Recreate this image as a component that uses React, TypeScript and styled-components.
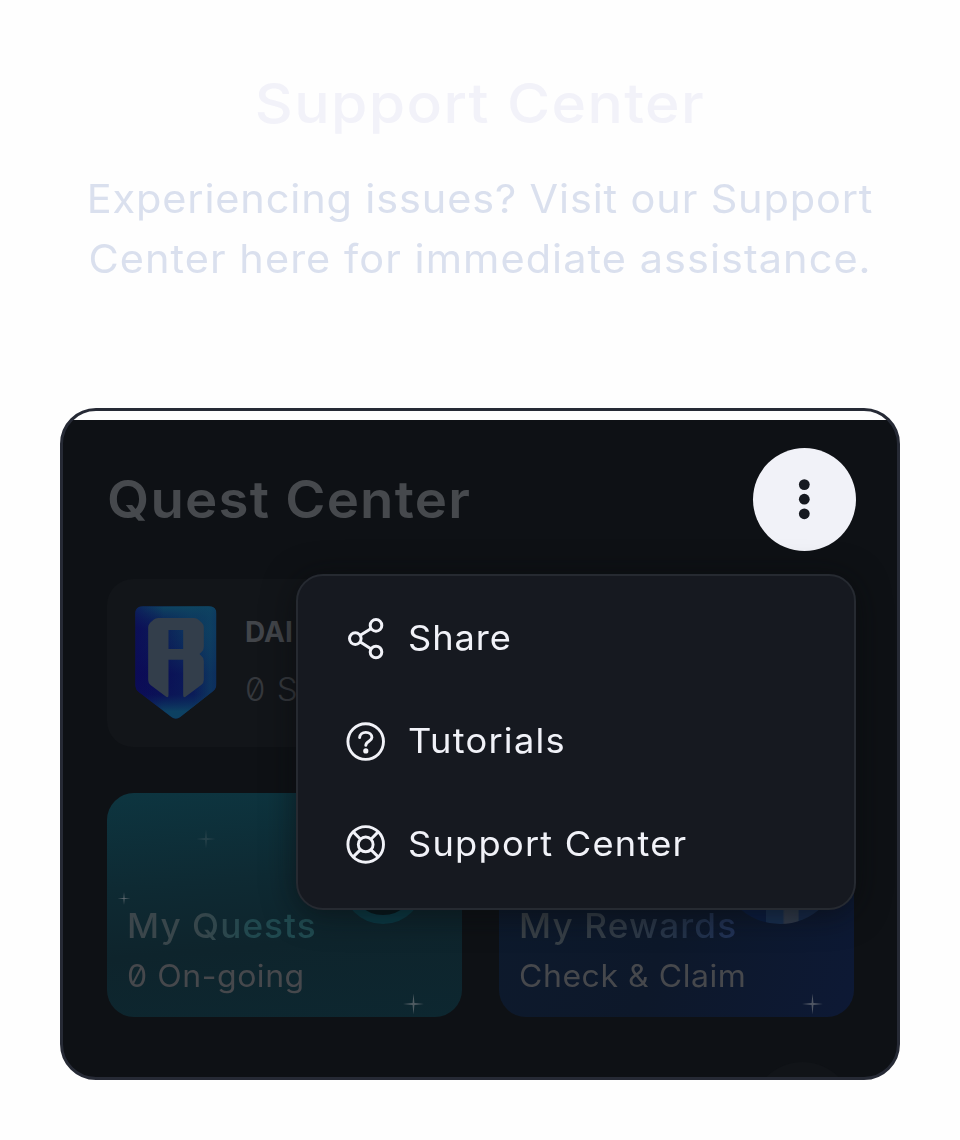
import React from "react";
import styled, { createGlobalStyle } from "styled-components";

const GlobalStyle = createGlobalStyle`
  * { box-sizing: border-box; }
  body {
    margin: 0;
    background: #fefefe;
    font-family: Inter, "Liberation Sans", sans-serif;
    font-feature-settings: "zero" 1;
  }
`;

const Page = styled.main`
  width: 960px;
  height: 1140px;
  padding: 0 60px;
  display: flex;
  flex-direction: column;
  overflow: hidden;
`;

const Intro = styled.header`
  height: 408px;
  padding-top: 73px;
  text-align: center;
  flex: none;
`;

const Title = styled.h1`
  margin: 0;
  font-size: 55.5px;
  line-height: 60px;
  font-weight: 500;
  letter-spacing: 1.3px;
  color: #f2f2f9;
  transform: scaleX(1.06);
`;

const Lead = styled.p`
  margin: 36px 0 0;
  color: #dae0ee;
`;

const LeadLine = styled.span<{ $spacing: number }>`
  display: block;
  font-size: 39.5px;
  line-height: 60px;
  white-space: nowrap;
  letter-spacing: ${(p) => p.$spacing}px;
  transform: scaleX(1.05);
`;

const Frame = styled.section`
  position: relative;
  height: 672px;
  flex: none;
  padding-top: 9px;
  border: 3px solid #262a35;
  border-radius: 36px;
  background: linear-gradient(#fefefe 9px, #0e1115 9px);
  overflow: hidden;
`;

const Screen = styled.div`
  height: 657px;
  padding: 28px 41px 0 44px;
  display: flex;
  flex-direction: column;
`;

const ScreenHeader = styled.div`
  display: flex;
  align-items: center;
  justify-content: space-between;
  height: 103px;
`;

const ScreenTitle = styled.h2`
  margin: 0;
  font-size: 52px;
  line-height: 60px;
  font-weight: 600;
  letter-spacing: 1.15px;
  color: #46494d;
  transform: scaleX(1.05);
  transform-origin: left;
`;

const MoreButton = styled.button`
  width: 103px;
  height: 103px;
  padding: 0;
  border: 0;
  border-radius: 50%;
  background: #f1f2f8;
  svg { display: block; }
`;

const Daily = styled.div`
  display: flex;
  width: 747px;
  height: 168px;
  margin-top: 28px;
  padding: 27px 28px;
  gap: 28px;
  border-radius: 26px;
  background: #121519;
`;

const DailyText = styled.div`
  display: flex;
  flex-direction: column;
  padding-top: 9px;
  white-space: nowrap;
`;

const DailyTitle = styled.div`
  font-size: 28px;
  line-height: 34px;
  font-weight: 700;
  color: #42454a;
`;

const DailyCount = styled.div`
  margin-top: 20px;
  font-size: 33px;
  line-height: 40px;
  font-weight: 300;
  letter-spacing: 1px;
  color: #35383d;
`;

const Cards = styled.div`
  display: flex;
  gap: 37px;
  margin-top: 46px;
`;

const Card = styled.div<{ $background: string }>`
  position: relative;
  display: flex;
  flex-direction: column;
  justify-content: flex-end;
  width: 355px;
  height: 224px;
  padding: 0 20px 21px;
  border-radius: 27px;
  overflow: hidden;
  background: ${(p) => p.$background};
`;

const Decoration = styled.svg`
  position: absolute;
  inset: 0;
`;

const CardTitle = styled.div<{ $ink: string; $spacing: number }>`
  position: relative;
  align-self: flex-start;
  font-size: 33.5px;
  line-height: 42px;
  font-weight: 500;
  letter-spacing: ${(p) => p.$spacing}px;
  color: transparent;
  background: ${(p) => p.$ink};
  background-clip: text;
  transform: scaleX(1.05);
  transform-origin: left;
`;

const CardNote = styled.div<{ $spacing: number }>`
  position: relative;
  margin-top: 9px;
  font-size: 30.5px;
  line-height: 40px;
  letter-spacing: ${(p) => p.$spacing}px;
  white-space: nowrap;
  color: #46484c;
  transform: scaleX(1.05);
  transform-origin: left;
`;

const Menu = styled.div`
  position: absolute;
  left: 233px;
  top: 163px;
  width: 560px;
  height: 336px;
  padding: 11px 47px;
  border: 2px solid #262a31;
  border-radius: 27px;
  background: #161920;
  box-shadow: 0 4px 32px rgba(9, 10, 12, 0.6);
`;

const MenuItem = styled.div`
  display: flex;
  align-items: center;
  gap: 21px;
  height: 102.8px;
  color: #f1f2f8;
  svg { flex: none; }
`;

const MenuLabel = styled.span<{ $spacing: number }>`
  font-size: 34.5px;
  line-height: 42px;
  letter-spacing: ${(p) => p.$spacing}px;
  white-space: nowrap;
  transform: scaleX(1.05);
  transform-origin: left;
`;

const NextBubble = styled.div`
  position: absolute;
  left: 688px;
  bottom: -88px;
  width: 103px;
  height: 103px;
  border-radius: 50%;
  background: #111418;
`;

const Shield = () => (
  <svg width="82" height="113" viewBox="105 108 245 339">
    <defs>
      <linearGradient id="shield" x1="0" y1="0.35" x2="1" y2="0.25">
        <stop offset="0" stopColor="#0c0b55" />
        <stop offset="0.3" stopColor="#0c1556" />
        <stop offset="0.7" stopColor="#0d3e61" />
        <stop offset="1" stopColor="#0e405f" />
      </linearGradient>
      <linearGradient id="tip" x1="0" y1="0" x2="0" y2="1">
        <stop offset="0" stopColor="#0e4661" />
        <stop offset="0.2" stopColor="#0c2c5b" stopOpacity="0.3" />
        <stop offset="0.6" stopColor="#0a0b55" stopOpacity="0.65" />
        <stop offset="0.78" stopColor="#0a1256" stopOpacity="0.75" />
        <stop offset="0.93" stopColor="#0d4162" />
      </linearGradient>
      <linearGradient id="edge" x1="0" y1="0" x2="1" y2="0">
        <stop offset="0" stopColor="#0c0b58" />
        <stop offset="0.35" stopColor="#0c0b58" stopOpacity="0" />
        <stop offset="0.72" stopColor="#0e3e60" stopOpacity="0" />
        <stop offset="0.92" stopColor="#0e4262" />
        <stop offset="1" stopColor="#0d3860" />
      </linearGradient>
      <clipPath id="body">
        <path d="M129 109H325Q349 109 349 133V340Q349 355 338 364L240 441Q227 451 214 441L116 366Q105 357 105 342V133Q105 109 129 109Z" />
      </clipPath>
    </defs>
    <g clipPath="url(#body)">
      <path d="M105 108H349V448H105Z" fill="url(#shield)" />
      <path d="M105 108H349V448H105Z" fill="url(#tip)" />
      <path d="M105 108H349V448H105Z" fill="url(#edge)" opacity="0.6" />
    </g>
    <path
      fillRule="evenodd"
      fill="#333e4b"
      d="M174 144H282Q290 144 295 149L305 158Q311 164 311 172V230Q311 241 304 246L298 252L304 258Q311 263 311 273V329Q311 338 304 344L258 379Q249 386 249 375V269H205V375Q205 386 196 379L151 345Q144 339 144 330V172Q144 164 150 158L160 149Q166 144 174 144ZM205 180V237H249V180Z"
    />
  </svg>
);

const ShareIcon = () => (
  <svg width="42" height="44" viewBox="0 0 42 44" fill="none" stroke="currentColor" strokeWidth="3">
    <circle cx="10.3" cy="22.6" r="5.8" />
    <circle cx="31" cy="9.4" r="5.8" />
    <circle cx="31" cy="36" r="5.8" />
    <path d="M15.3 19.3L25.8 12.7M15.3 25.9L25.8 32.7" />
  </svg>
);

const HelpIcon = () => (
  <svg width="42" height="44" viewBox="0 0 42 44" fill="none" stroke="currentColor" strokeWidth="2.9">
    <circle cx="20.7" cy="22.6" r="17.8" />
    <path d="M14.6 18.6C14.8 15.4 17.3 13.4 20.8 13.4C24.4 13.4 26.9 15.5 26.9 18.6C26.9 22.3 20.8 22.3 20.8 26.4" strokeLinecap="round" />
    <circle cx="20.8" cy="31.9" r="2.6" fill="currentColor" stroke="none" />
  </svg>
);

const BuoyIcon = () => (
  <svg width="42" height="44" viewBox="0 0 42 44" fill="none" stroke="currentColor" strokeWidth="2.9">
    <circle cx="20.7" cy="22.4" r="17.8" />
    <circle cx="20.7" cy="22.4" r="7.4" />
    <path d="M8.2 9.9L15.5 17.2M33.2 9.9L25.9 17.2M8.2 34.9L15.5 27.6M33.2 34.9L25.9 27.6" />
  </svg>
);

const Sparkle = ({ x, y, r, opacity }: { x: number; y: number; r: number; opacity: number }) => (
  <path
    transform={`translate(${x} ${y}) scale(${r})`}
    opacity={opacity}
    fill="#7b7f84"
    d="M0-1L.09-.09L1 0L.09.09L0 1L-.09.09L-1 0L-.09-.09Z"
  />
);

export default function App() {
  return (
    <>
      <GlobalStyle />
      <Page>
        <Intro>
          <Title>Support Center</Title>
          <Lead>
            <LeadLine $spacing={0.82}>Experiencing issues? Visit our Support</LeadLine>
            <LeadLine $spacing={1}>Center here for immediate assistance.</LeadLine>
          </Lead>
        </Intro>
        <Frame>
          <Screen>
            <ScreenHeader>
              <ScreenTitle>Quest Center</ScreenTitle>
              <MoreButton aria-label="More">
                <svg width="103" height="103" viewBox="0 0 103 103" fill="#161920">
                  <circle cx="51.3" cy="36.6" r="5.4" />
                  <circle cx="51.3" cy="51.2" r="5.4" />
                  <circle cx="51.3" cy="65.8" r="5.4" />
                </svg>
              </MoreButton>
            </ScreenHeader>
            <Daily>
              <Shield />
              <DailyText>
                <DailyTitle>DAI</DailyTitle>
                <DailyCount>0 S</DailyCount>
              </DailyText>
            </Daily>
            <Cards>
              <Card $background="linear-gradient(175deg, #0d3540 0%, #0e2a33 38%, #0e242c 65%, #0d2730 100%)">
                <Decoration width="355" height="224">
                  <circle cx="276" cy="90" r="36.5" fill="#08171c" stroke="#0b3a45" strokeWidth="9" />
                  <Sparkle x={99} y={46} r={10} opacity={0.22} />
                  <Sparkle x={17} y={105.5} r={6.5} opacity={0.7} />
                  <Sparkle x={306.5} y={211} r={10.5} opacity={0.6} />
                </Decoration>
                <CardTitle $spacing={1} $ink="linear-gradient(90deg, #3c464b 0%, #36464b 40%, #20484e 65%, #204a50 100%)">
                  My Quests
                </CardTitle>
                <CardNote $spacing={0.5}>0 On-going</CardNote>
              </Card>
              <Card $background="linear-gradient(110deg, #0d1a2d 0%, #0d182a 50%, #0d1935 100%)">
                <Decoration width="355" height="224">
                  <defs>
                    <linearGradient id="coin">
                      <stop offset="0.38" stopColor="#0b1d42" />
                      <stop offset="0.38" stopColor="#182f50" />
                      <stop offset="0.52" stopColor="#182f50" />
                      <stop offset="0.54" stopColor="#333c4c" />
                      <stop offset="0.65" stopColor="#303b4c" />
                      <stop offset="0.66" stopColor="#16294a" />
                    </linearGradient>
                  </defs>
                  <circle cx="281" cy="71" r="60" fill="url(#coin)" />
                  <Sparkle x={313.5} y={211} r={10.5} opacity={0.6} />
                </Decoration>
                <CardTitle $spacing={1.07} $ink="linear-gradient(90deg, #3a4147 0%, #323c47 45%, #22324b 80%, #213257 100%)">
                  My Rewards
                </CardTitle>
                <CardNote $spacing={0.5}>Check &amp; Claim</CardNote>
              </Card>
            </Cards>
          </Screen>
          <NextBubble />
          <Menu>
            <MenuItem><ShareIcon /><MenuLabel $spacing={0.9}>Share</MenuLabel></MenuItem>
            <MenuItem><HelpIcon /><MenuLabel $spacing={1.2}>Tutorials</MenuLabel></MenuItem>
            <MenuItem><BuoyIcon /><MenuLabel $spacing={1.17}>Support Center</MenuLabel></MenuItem>
          </Menu>
        </Frame>
      </Page>
    </>
  );
}
